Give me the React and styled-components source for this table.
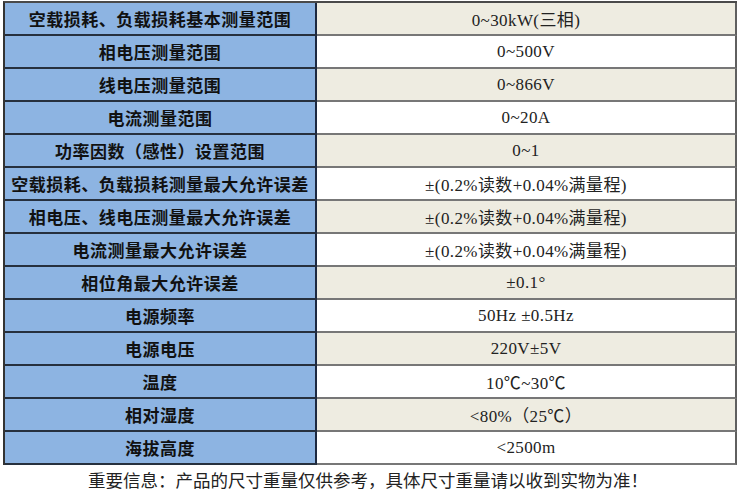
import React from "react";
import styled, { createGlobalStyle } from "styled-components";

/* ---------------- DATA ---------------- */
const rows = [
  ["空载损耗、负载损耗基本测量范围", "0~30kW(三相)"],
  ["相电压测量范围", "0~500V"],
  ["线电压测量范围", "0~866V"],
  ["电流测量范围", "0~20A"],
  ["功率因数（感性）设置范围", "0~1"],
  ["空载损耗、负载损耗测量最大允许误差", "±(0.2%读数+0.04%满量程)"],
  ["相电压、线电压测量最大允许误差", "±(0.2%读数+0.04%满量程)"],
  ["电流测量最大允许误差", "±(0.2%读数+0.04%满量程)"],
  ["相位角最大允许误差", "±0.1°"],
  ["电源频率", "50Hz ±0.5Hz"],
  ["电源电压", "220V±5V"],
  ["温度", "10℃~30℃"],
  ["相对湿度", "<80%（25℃）"],
  ["海拔高度", "<2500m"],
];

/* ---------------- GLOBAL ---------------- */
const GlobalStyle = createGlobalStyle`
  body {
    margin: 0;
    background: #ffffff;
    font-family: "Liberation Serif", "Noto Sans CJK SC", serif;
  }
`;

/* ---------------- STYLES ---------------- */
const Page = styled.div`
  width: 750px;
  padding-top: 1px;
`;

const Table = styled.div`
  width: 734px;
  margin-left: 3px;
  border-top: 2px solid #4a4a4a;
  border-left: 2px solid #333;
  box-sizing: border-box;
`;

const Row = styled.div`
  display: flex;
  height: 33px;
`;

const Label = styled.div`
  width: 312px;
  flex: none;
  box-sizing: border-box;
  display: flex;
  align-items: center;
  justify-content: center;
  background: #8db4e2;
  border-right: 2px solid #1d2940;
  border-bottom: 2px solid #26303e;
  font-family: "Noto Sans CJK SC", sans-serif;
  font-weight: 700;
  font-size: 17px;
  letter-spacing: 0.5px;
  color: #111;
  white-space: nowrap;
`;

const Value = styled.div`
  flex: 1;
  box-sizing: border-box;
  display: flex;
  align-items: center;
  justify-content: center;
  background: ${({ $alt }) => ($alt ? "#eeece1" : "#ffffff")};
  border-right: 2px solid #5f5f5f;
  border-bottom: 2px solid #777;
  font-family: "Liberation Serif", "Noto Sans CJK SC", serif;
  font-size: 17px;
  letter-spacing: 0.4px;
  color: #222;
  white-space: nowrap;
`;

const Note = styled.div`
  width: 736px;
  height: 28px;
  display: flex;
  align-items: center;
  justify-content: center;
  font-family: "Noto Sans CJK SC", serif;
  font-size: 17.5px;
  color: #222;
`;

/* ---------------- COMPONENT ---------------- */
export default function App() {
  return (
    <Page>
      <GlobalStyle />
      <Table>
        {rows.map(([label, value], i) => (
          <Row key={i}>
            <Label>{label}</Label>
            <Value $alt={i % 2 === 0}>{value}</Value>
          </Row>
        ))}
      </Table>
      <Note>重要信息：产品的尺寸重量仅供参考，具体尺寸重量请以收到实物为准！</Note>
    </Page>
  );
}
